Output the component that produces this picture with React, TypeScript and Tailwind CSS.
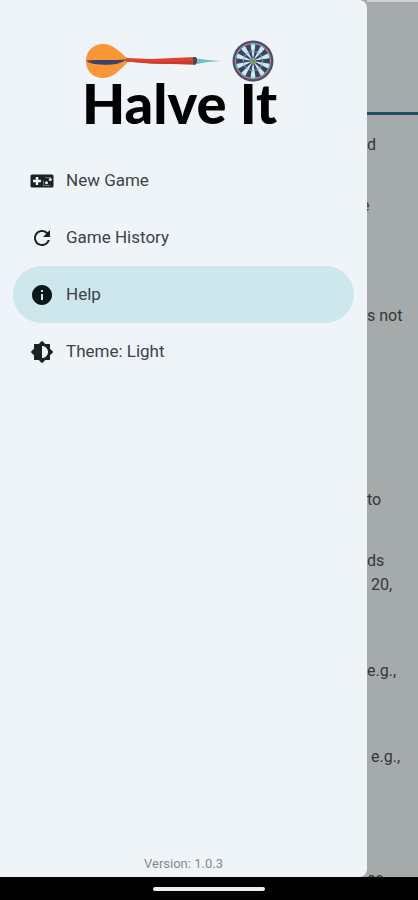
import React from "react";
import { MdBrightness6, MdInfo, MdRefresh } from "react-icons/md";

type DrawerItemProps = {
  label: string;
  icon: React.ReactNode;
  active?: boolean;
};

const GamepadIcon = () => (
  <svg viewBox="0 0 24 24" className="size-6" fill="none">
    <rect x="0.5" y="5.5" width="23" height="13" rx="1.5" fill="currentColor" />
    <path d="M7 8v8M3 12h8" stroke="#eff4f8" strokeWidth="2.4" />
    <path
      d="M13.500 11.500v5h6.500M15 8.500h6"
      stroke="#eff4f8"
      strokeWidth="0.8"
      opacity="0.5"
    />
    <circle cx="16.500" cy="13.800" r="1.500" fill="#eff4f8" />
    <circle cx="20.300" cy="10.600" r="1.500" fill="#eff4f8" />
  </svg>
);

const Dart = () => (
  <svg viewBox="0 0 136 36" className="h-9 w-[136px]">
    <path
      d="M0 18C0 8 7 1 17 1c10 0 17 8 24 14v5C34 27 27 35 17 35 7 35 0 28 0 18z"
      fill="#fb9637"
    />
    <path d="M0 17.500c12-1 27 0 41-1-8 5-17 6-26 5-6 0-11-1-15-4z" fill="#3d4468" />
    <path d="M40 15l25 1 44-2 2 3.500-2 4-44-1-25-2z" fill="#dd4430" />
    <path d="M40 18l25 1 46-1-2 3.500-44-1-25-2z" fill="#c93a2e" />
    <path d="M107 14h3l2 3.500-2 4h-3z" fill="#5b3f5c" />
    <path d="M111 15.500l11 1.500 13 1-13 1-11 2z" fill="#70bfc6" />
  </svg>
);

// twenty wedges, every second one light
const segments = Array.from({ length: 20 }, (_, i) => i * 18);

const Dartboard = () => (
  <svg viewBox="-21 -21 42 42" className="size-[42px]">
    <circle r="20.500" fill="#4d4f70" />
    <circle r="18" fill="#3c4265" />
    {segments.map((angle, i) => (
      <g key={angle} transform={`rotate(${angle})`}>
        <path
          d="M0 0L-2.600 -16.800A17 17 0 0 1 2.600 -16.800z"
          fill={i % 2 ? "#3c4265" : "#c4edf0"}
        />
        <path
          d="M-2.700 -17.300A17.500 17.500 0 0 1 2.700 -17.300"
          fill="none"
          stroke={i % 2 ? "#c97f83" : "#77a69d"}
          strokeWidth="1.400"
        />
        <path
          d="M-1.500 -9.500A9.500 9.500 0 0 1 1.500 -9.500"
          fill="none"
          stroke={i % 2 ? "#a97b8b" : "#8fc4c4"}
          strokeWidth="1.200"
        />
      </g>
    ))}
    <circle r="3" fill="#6fa678" />
    <circle r="1.300" fill="#a0794f" />
  </svg>
);

const DrawerItem = ({ label, icon, active }: DrawerItemProps) => (
  <li>
    <button
      className={
        active
          ? "flex h-[57px] w-full cursor-pointer items-center gap-3 rounded-full bg-[#cde7ed] px-[17px] text-[#0c171c]"
          : "flex h-[57px] w-full cursor-pointer items-center gap-3 rounded-full px-[17px] text-[#1a2224]"
      }
    >
      {icon}
      <span className="text-[17px] text-[#3b4347]">{label}</span>
    </button>
  </li>
);

const Drawer = () => (
  <aside className="flex w-[367px] shrink-0 flex-col rounded-r-lg bg-[#eff4f8]">
    <header className="flex flex-col items-center pt-10 pr-2">
      <div className="flex w-[188px] items-center justify-between">
        <Dart />
        <Dartboard />
      </div>
      <h1 className="font-[Lato,sans-serif] text-[56px] leading-[42px] font-black whitespace-nowrap text-black">
        Halve It
      </h1>
    </header>
    <nav className="px-[13px] pt-7">
      <ul>
        <DrawerItem label="New Game" icon={<GamepadIcon />} />
        <DrawerItem label="Game History" icon={<MdRefresh className="size-6" />} />
        <DrawerItem label="Help" icon={<MdInfo className="size-6" />} active />
        <DrawerItem
          label="Theme: Light"
          icon={<MdBrightness6 className="size-6" />}
        />
      </ul>
    </nav>
    <p className="mt-auto pb-[3px] text-center text-[13px] leading-5 text-[#858b8e]">
      Version: 1.0.3
    </p>
  </aside>
);

const HelpPage = () => (
  <main className="h-full min-w-0 flex-1 overflow-hidden text-base leading-6 whitespace-nowrap text-[#33383a]">
    <div className="h-[115px] border-t-2 border-b-3 border-t-[#cdd1d2] border-b-[#204f5b]" />
    <p className="mt-[18px]">d</p>
    <p className="-ml-1.5 mt-[37px]">e</p>
    <p className="mt-[86px]">s not</p>
    <p className="mt-[160px]">to</p>
    <p className="mt-[37px]">ds</p>
    <p className="pl-1">20,</p>
    <p className="mt-[62px]">e.g.,</p>
    <p className="mt-[62px] pl-1">e.g.,</p>
    <p className="mt-[98px]">es</p>
  </main>
);

export default function App() {
  return (
    <div className="flex h-screen flex-col bg-black font-[Roboto,sans-serif]">
      <div className="flex min-h-0 flex-1 bg-[#a5aaab]">
        <Drawer />
        <HelpPage />
      </div>
      <footer className="flex h-[23px] shrink-0 items-center justify-center">
        <div className="h-1 w-28 rounded-full bg-[#eeeeee]" />
      </footer>
    </div>
  );
}
